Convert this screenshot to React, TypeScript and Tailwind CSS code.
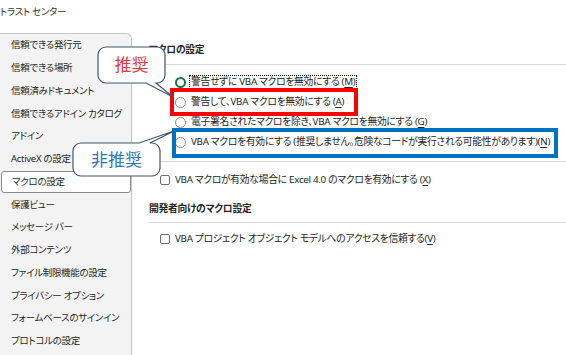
import React from 'react';

const SIDE_ITEMS = [
  '信頼できる発行元',
  '信頼できる場所',
  '信頼済みドキュメント',
  '信頼できるアドイン カタログ',
  'アドイン',
  'ActiveX の設定',
  'マクロの設定',
  '保護ビュー',
  'メッセージ バー',
  '外部コンテンツ',
  'ファイル制限機能の設定',
  'プライバシー オプション',
  'フォームベースのサインイン',
  'プロトコルの設定',
];

const Radio = ({ checked }: { checked?: boolean }) =>
  checked ? (
    <span className="w-[11px] h-[11px] rounded-full border-[2.5px] border-[#107c41] bg-white shrink-0" />
  ) : (
    <span className="w-[11px] h-[11px] rounded-full border border-[#8a8a8a] bg-white shrink-0" />
  );

const Check = () => <span className="w-[10px] h-[10px] rounded-[2px] border border-[#6e6e6e] bg-white shrink-0" />;

const Key = ({ k }: { k: string }) => (
  <>
    (<span className="underline underline-offset-2">{k}</span>)
  </>
);

const App: React.FC = () => {
  return (
    <div
      className="relative w-[566px] h-[355px] overflow-hidden bg-white text-[#262626] flex flex-col [font-feature-settings:'palt'] text-[9.5px] tracking-[-0.3px]"
      style={{ fontFamily: '"Noto Sans", "Noto Sans CJK JP", sans-serif' }}
    >
      {/* title */}
      <div className="h-[33px] shrink-0 pt-[5px] text-[9.5px] leading-[14px] text-[#333]">トラスト センター</div>

      <div className="flex flex-1">
        {/* sidebar */}
        <div className="w-[132px] shrink-0 bg-[#f3f3f3] border-t border-r border-[#c6c6c6] rounded-tr-[6px]">
          {SIDE_ITEMS.map((item, i) =>
            i === 6 ? (
              <div key={item} className="h-[22.75px] flex items-center pl-[10px] ml-px bg-white border border-[#8c8c8c] rounded-[3px]">
                {item}
              </div>
            ) : (
              <div key={item} className="h-[22.75px] flex items-center pl-[11px] whitespace-nowrap">
                {item}
              </div>
            )
          )}
        </div>

        {/* content */}
        <div className="flex-1 pl-[17px] pt-[10px] flex flex-col text-[9.8px]">
          <div className="h-[14px] leading-[14px] font-bold">マクロの設定</div>
          <div className="h-px bg-[#d9d9d9] mt-[7px]" />

          <div className="mt-[7px] pl-[26px] flex flex-col">
            <div className="h-[20px] flex items-center gap-[3px]">
              <Radio checked />
              <span className="border border-dotted border-black px-px leading-[12px] whitespace-nowrap">
                警告せずに VBA マクロを無効にする <Key k="M" />
              </span>
            </div>
            <div className="h-[20px] flex items-center gap-[5px] whitespace-nowrap">
              <Radio />
              <span>
                警告して、VBA マクロを無効にする <Key k="A" />
              </span>
            </div>
            <div className="h-[20px] flex items-center gap-[5px] whitespace-nowrap">
              <Radio />
              <span>
                電子署名されたマクロを除き、VBA マクロを無効にする <Key k="G" />
              </span>
            </div>
            <div className="h-[20px] flex items-center gap-[5px] whitespace-nowrap">
              <Radio />
              <span>
                VBA マクロを有効にする (推奨しません。危険なコードが実行される可能性があります)
                <Key k="N" />
              </span>
            </div>
          </div>

          <div className="h-px bg-[#d9d9d9] mt-[9px]" />

          <div className="mt-[8px] pl-[11px] h-[20px] flex items-center gap-[5px] whitespace-nowrap">
            <Check />
            <span>
              VBA マクロが有効な場合に Excel 4.0 のマクロを有効にする <Key k="X" />
            </span>
          </div>

          <div className="mt-[12px] h-[14px] leading-[14px] font-bold">開発者向けのマクロ設定</div>
          <div className="h-px bg-[#d9d9d9] mt-[6px]" />

          <div className="mt-[6px] pl-[11px] h-[20px] flex items-center gap-[5px] whitespace-nowrap">
            <Check />
            <span>
              VBA プロジェクト オブジェクト モデルへのアクセスを信頼する
              <Key k="V" />
            </span>
          </div>
        </div>
      </div>

      {/* highlight boxes */}
      <div className="absolute left-[170px] top-[88px] w-[188px] h-[28px] border-[4px] border-[#ff0000]" />
      <div className="absolute left-[172px] top-[128px] w-[386px] h-[30px] border-[4px] border-[#0070c0]" />

      {/* callout: 推奨 */}
      <div className="absolute left-[96px] top-[45px] w-[82px] h-[56px] tracking-normal">
        <svg width="82" height="56" viewBox="0 0 82 56" className="absolute inset-0">
          <path
            d="M10 2 H61 A8 8 0 0 1 69 10 V30 A8 8 0 0 1 61 38 H60 L77 52 L50 38 H10 A8 8 0 0 1 2 30 V10 A8 8 0 0 1 10 2 Z"
            fill="white"
            stroke="#44546a"
            strokeWidth="1.2"
          />
        </svg>
        <div className="absolute left-[2px] top-[2px] w-[67px] h-[36px] flex items-center justify-center text-[17px] text-[#e0393e]">
          推奨
        </div>
      </div>

      {/* callout: 非推奨 */}
      <div className="absolute left-[71px] top-[129px] w-[106px] h-[50px] tracking-normal">
        <svg width="106" height="50" viewBox="0 0 106 50" className="absolute inset-0">
          <path
            d="M10 14 H68 L103 2 L79 14 H81 A8 8 0 0 1 89 22 V39 A8 8 0 0 1 81 47 H10 A8 8 0 0 1 2 39 V22 A8 8 0 0 1 10 14 Z"
            fill="white"
            stroke="#44546a"
            strokeWidth="1.2"
          />
        </svg>
        <div className="absolute left-[2px] top-[14px] w-[87px] h-[33px] flex items-center justify-center text-[17px] text-[#2e75b6]">
          非推奨
        </div>
      </div>
    </div>
  );
};

export default App;
